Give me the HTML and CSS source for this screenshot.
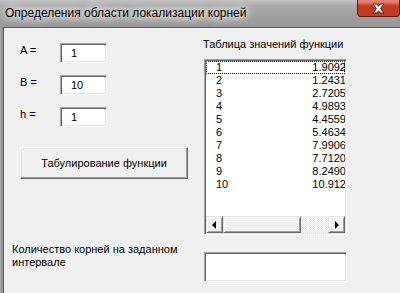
FILE: index.html
```html
<!DOCTYPE html>
<html lang="ru">
<head>
  <meta charset="UTF-8">
  <title>Определения области локализации корней</title>
  <link rel="stylesheet" href="styles.css">
</head>
<body>
  <div class="window">
    <div class="titlebar">
      <span class="title">Определения области локализации корней</span>
      <div class="close-btn">
        <svg class="close-icon" width="17" height="11" viewBox="0 0 17 11">
          <path d="M3 1 H7 L8.5 3.2 L10 1 H14 L10.6 5.5 L14 10 H10 L8.5 7.8 L7 10 H3 L6.4 5.5 Z" fill="#fff" stroke="#4a1a14" stroke-width="1" stroke-linejoin="round"/>
        </svg>
      </div>
    </div>

    <div class="client">
      <div class="main">
        <div class="params-col">
          <div class="params">
            <label class="param-label">A =</label>
            <div class="field">1</div>
            <label class="param-label">B =</label>
            <div class="field">10</div>
            <label class="param-label">h =</label>
            <div class="field">1</div>
          </div>
          <div class="btn">Табулирование функции</div>
        </div>

        <div class="table-col">
          <div class="caption">Таблица значений функции</div>
          <div class="listbox">
            <div class="rows">
              <div class="row selected"><span>1</span><span class="val">1.9092</span></div>
              <div class="row"><span>2</span><span class="val">1.2431</span></div>
              <div class="row"><span>3</span><span class="val">2.7205</span></div>
              <div class="row"><span>4</span><span class="val">4.9893</span></div>
              <div class="row"><span>5</span><span class="val">4.4559</span></div>
              <div class="row"><span>6</span><span class="val">5.4634</span></div>
              <div class="row"><span>7</span><span class="val">7.9906</span></div>
              <div class="row"><span>8</span><span class="val">7.7120</span></div>
              <div class="row"><span>9</span><span class="val">8.2490</span></div>
              <div class="row"><span>10</span><span class="val">10.912</span></div>
            </div>
            <div class="hscroll">
              <div class="sb-btn"><span class="arrow-left"></span></div>
              <div class="sb-thumb"></div>
              <div class="sb-track"></div>
              <div class="sb-btn"><span class="arrow-right"></span></div>
            </div>
          </div>
        </div>
      </div>

      <div class="result">
        <div class="result-label">Количество корней на заданном интервале</div>
        <div class="field result-field"></div>
      </div>
    </div>
  </div>
</body>
</html>
```

FILE: styles.css
```css
body {
  margin: 0;
  width: 400px;
  height: 293px;
  overflow: hidden;
  font-family: "Liberation Sans", Arial, sans-serif;
  font-size: 11px;
  color: #000;
  background: #8c8c8c;
}

.window {
  height: 293px;
  display: flex;
  flex-direction: column;
  background: linear-gradient(90deg, #a9a9a9, #8f8f8f 3px);
}

/* title bar */
.titlebar {
  height: 27px;
  flex: none;
  display: flex;
  align-items: flex-start;
  background: linear-gradient(180deg, #c4c4c4 0, #a9a9a9 6px, #9c9c9c 20px, #979797 27px);
}

.title {
  flex: 1;
  margin: 6px 0 0 5px;
  font-size: 12px;
  line-height: 15px;
  color: #000;
  text-shadow: 0 0 6px #fff, 0 0 10px #fff, 0 0 14px #eee;
}

.close-btn {
  flex: none;
  width: 43px;
  height: 17px;
  box-sizing: border-box;
  border: 1px solid #5e1d12;
  border-top-width: 0;
  border-radius: 0 0 4px 4px;
  background-color: #c23b22;
  box-shadow: inset 0 6px 3px -2px rgba(255, 190, 175, 0.55);
}

.close-icon {
  display: block;
  margin: 3px auto 0;
}

/* client area */
.client {
  flex: 1;
  margin-left: 3px;
  border-left: 1px solid #5f5f5f;
  border-top: 1px solid #5f5f5f;
  background: #f0f0f0;
}

.main {
  display: flex;
  align-items: flex-start;
}

.params-col {
  width: 200px;
  box-sizing: border-box;
  padding: 15px 0 0 16px;
}

.params {
  display: grid;
  grid-template-columns: 40px 47px;
  grid-auto-rows: 20px;
  row-gap: 12px;
}

.param-label {
  line-height: 13px;
  padding-top: 1px;
}

.field {
  box-sizing: border-box;
  height: 20px;
  padding: 2px 0 0 10px;
  line-height: 14px;
  background: #fff;
  border: 1px solid;
  border-color: #a0a0a0 #fff #fff #a0a0a0;
  box-shadow: inset 1px 1px #696969, inset -1px -1px #e3e3e3;
}

.btn {
  width: 168px;
  height: 32px;
  margin-top: 20px;
  box-sizing: border-box;
  display: flex;
  justify-content: center;
  align-items: center;
  background: #f0f0f0;
  border: 1px solid;
  border-color: #fff #696969 #696969 #fff;
  box-shadow: inset -1px -1px #a0a0a0, inset 1px 1px #e3e3e3;
}

.table-col {
  padding-top: 10px;
}

.caption {
  margin-left: -1px;
  line-height: 13px;
}

.listbox {
  width: 143px;
  height: 176px;
  margin-top: 8px;
  box-sizing: border-box;
  display: flex;
  flex-direction: column;
  background: #fff;
  border: 1px solid;
  border-color: #a0a0a0 #fff #fff #a0a0a0;
  box-shadow: inset 1px 1px #696969, inset -1px -1px #e3e3e3;
  padding: 1px;
}

.rows {
  flex: 1;
  overflow: hidden;
}

.row {
  height: 13px;
  line-height: 13px;
  box-sizing: border-box;
  display: flex;
  justify-content: space-between;
  padding-left: 10px;
  white-space: nowrap;
}

.row .val {
  margin-right: -1px;
}

.row.selected {
  outline: 1px dotted #000;
  outline-offset: -1px;
}

/* horizontal scroll bar */
.hscroll {
  height: 17px;
  flex: none;
  display: flex;
}

.sb-btn,
.sb-thumb {
  box-sizing: border-box;
  height: 17px;
  background: #f0f0f0;
  border: 1px solid;
  border-color: #e3e3e3 #696969 #696969 #e3e3e3;
  box-shadow: inset 1px 1px #fff, inset -1px -1px #a0a0a0;
}

.sb-btn {
  width: 17px;
  display: flex;
  justify-content: center;
  align-items: center;
}

.sb-thumb {
  width: 78px;
}

.sb-track {
  flex: 1;
  background: repeating-conic-gradient(#fff 0 25%, #e4e4e4 0 50%) 0 0 / 2px 2px;
}

.arrow-left,
.arrow-right {
  width: 0;
  height: 0;
  border-top: 4px solid transparent;
  border-bottom: 4px solid transparent;
}

.arrow-left {
  border-right: 4px solid #000;
  margin-right: 1px;
}

.arrow-right {
  border-left: 4px solid #000;
  margin-left: 1px;
}

/* result row */
.result {
  display: flex;
  align-items: flex-start;
  padding: 8px 0 0 8px;
}

.result-label {
  width: 192px;
  padding-right: 20px;
  box-sizing: border-box;
  line-height: 13px;
}

.result-field {
  width: 143px;
  height: 30px;
  margin-top: 9px;
}
```
